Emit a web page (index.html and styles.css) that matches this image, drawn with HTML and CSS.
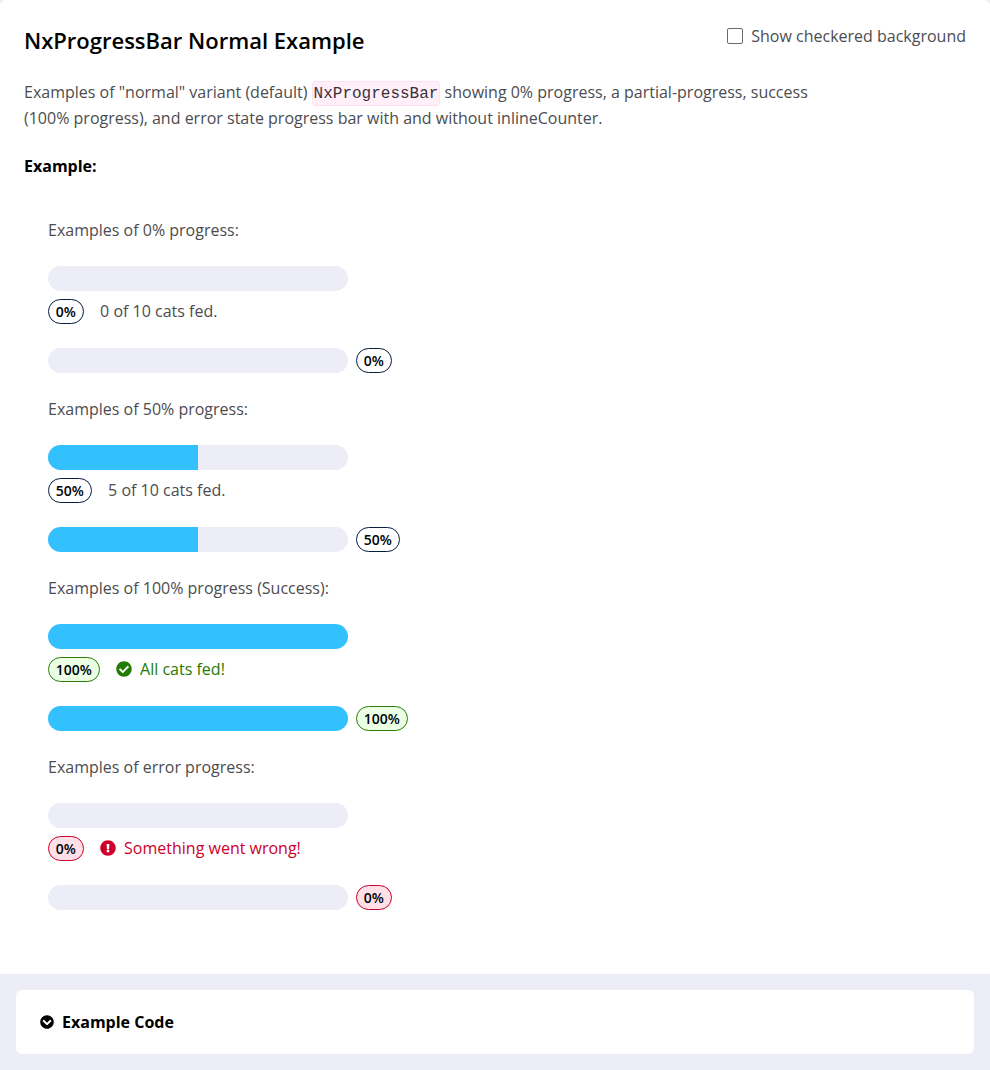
FILE: index.html
```html
<!DOCTYPE html>
<html lang="en">
<head>
<meta charset="utf-8">
<title>NxProgressBar</title>
<link rel="stylesheet" href="styles.css">
</head>
<body>
<section class="tile">
  <header class="tile-header">
    <h2 class="title">NxProgressBar Normal Example</h2>
    <label class="toggle"><span class="box"></span>Show checkered background</label>
  </header>
  <p class="description">Examples of "normal" variant (default) <code class="code">NxProgressBar</code> showing 0% progress, a partial-progress, success (100% progress), and error state progress bar with and without inlineCounter.</p>
  <h3 class="subtitle">Example:</h3>
  <div class="examples">
    <p class="label">Examples of 0% progress:</p>
    <div class="bar"></div>
    <div class="status"><span class="counter">0%</span><span class="message">0 of 10 cats fed.</span></div>
    <div class="inline"><div class="bar"></div><span class="counter">0%</span></div>

    <p class="label">Examples of 50% progress:</p>
    <div class="bar"><div class="fill" style="width: 50%"></div></div>
    <div class="status"><span class="counter">50%</span><span class="message">5 of 10 cats fed.</span></div>
    <div class="inline"><div class="bar"><div class="fill" style="width: 50%"></div></div><span class="counter">50%</span></div>

    <p class="label">Examples of 100% progress (Success):</p>
    <div class="bar"><div class="fill" style="width: 100%"></div></div>
    <div class="status success"><span class="counter">100%</span><svg class="icon" viewBox="0 0 512 512"><path fill="currentColor" d="M504 256c0 136.967-111.033 248-248 248S8 392.967 8 256 119.033 8 256 8s248 111.033 248 248zM227.314 387.314l184-184c6.248-6.248 6.248-16.379 0-22.627l-22.627-22.627c-6.248-6.249-16.379-6.249-22.628 0L216 308.118l-70.059-70.059c-6.248-6.248-16.379-6.248-22.628 0l-22.627 22.627c-6.248 6.248-6.248 16.379 0 22.627l104 104c6.249 6.249 16.379 6.249 22.628.001z"/></svg><span class="message">All cats fed!</span></div>
    <div class="inline success"><div class="bar"><div class="fill" style="width: 100%"></div></div><span class="counter">100%</span></div>

    <p class="label">Examples of error progress:</p>
    <div class="bar"></div>
    <div class="status error"><span class="counter">0%</span><svg class="icon" viewBox="0 0 512 512"><path fill="currentColor" d="M504 256c0 136.997-111.043 248-248 248S8 392.997 8 256C8 119.083 119.043 8 256 8s248 111.083 248 248zm-248 50c-25.405 0-46 20.595-46 46s20.595 46 46 46 46-20.595 46-46-20.595-46-46-46zm-43.673-165.346l7.418 136c.347 6.364 5.609 11.346 11.982 11.346h48.546c6.373 0 11.635-4.982 11.982-11.346l7.418-136c.375-6.874-5.098-12.654-11.982-12.654h-63.383c-6.884 0-12.356 5.78-11.981 12.654z"/></svg><span class="message">Something went wrong!</span></div>
    <div class="inline error"><div class="bar"></div><span class="counter">0%</span></div>
  </div>
</section>
<footer class="footer">
  <div class="accordion"><svg class="chevron" viewBox="0 0 512 512"><path fill="currentColor" d="M504 256c0 137-111 248-248 248S8 393 8 256 119 8 256 8s248 111 248 248zM273 369.9l135.500-135.500c9.400-9.400 9.400-24.600 0-33.900l-17-17c-9.400-9.400-24.600-9.400-33.900 0L256 285.100 154.400 183.500c-9.400-9.400-24.600-9.400-33.900 0l-17 17c-9.400 9.400-9.400 24.600 0 33.900L239 369.900c9.400 9.400 24.600 9.400 34 0z"/></svg>Example Code</div>
</footer>
</body>
</html>
```
FILE: styles.css
```css
* { box-sizing: border-box; }
body {
  margin: 0;
  background: #ededf7;
  color: #4c4c4f;
  font-family: "Open Sans", sans-serif;
  font-size: 16px;
  line-height: 24px;
}
.tile { height: 974px; padding: 24px; background: #fff; border-radius: 6px 6px 0 0; }
.tile-header { display: flex; justify-content: space-between; height: 55px; }
.title { margin: 0; color: #000; font-size: 22px; font-weight: 600; line-height: 32px; }
.toggle { display: flex; gap: 8px; height: 24px; align-items: center; }
.box { width: 16px; height: 16px; border: 1px solid #6a6a6e; border-radius: 2px; background: #fff; }
.description { width: 800px; margin: 0; line-height: 26px; }
.code {
  padding: 3px 1px 2px;
  border: 1px solid #fde0f2;
  border-radius: 4px;
  background: #ffeff9;
  color: #3b3038;
  font: 16px "Liberation Mono", monospace;
}
.subtitle { margin: 22px 0 0; color: #000; font-size: 16px; font-weight: 700; line-height: 26px; }
.examples { padding: 39px 24px 0; }
.label { margin: 0 0 24px; }
.bar { width: 300px; height: 25px; overflow: hidden; background: #ededf7; border-radius: 13px; }
.fill { height: 100%; background: #33c0ff; }
.status { display: flex; align-items: flex-start; margin-top: 8px; height: 25px; }
.counter {
  height: 25px;
  padding: 0 7.200px 0 6.800px;
  border: 1px solid #071d3d;
  border-radius: 13px;
  background: #fff;
  color: #000;
  font-size: 14px;
  font-weight: 600;
  line-height: 24px;
}
.message { margin-left: 16px; }
.icon { width: 16px; height: 16px; margin: 4px -8px 0 16px; }
.inline { display: flex; gap: 8px; margin: 24px 0; }
.success { color: #257a05; }
.success .counter { border-color: #2b7d0a; background: #ebffe5; }
.error { color: #cc0029; }
.error .counter { border-color: #cc0029; background: #ffe0e8; }
.footer { height: 96px; padding: 16px; }
.accordion {
  display: flex;
  align-items: center;
  gap: 8px;
  height: 64px;
  padding: 0 24px;
  background: #fff;
  border-radius: 6px;
  color: #000;
  font-weight: 700;
}
.chevron { width: 14px; height: 14px; }
```
